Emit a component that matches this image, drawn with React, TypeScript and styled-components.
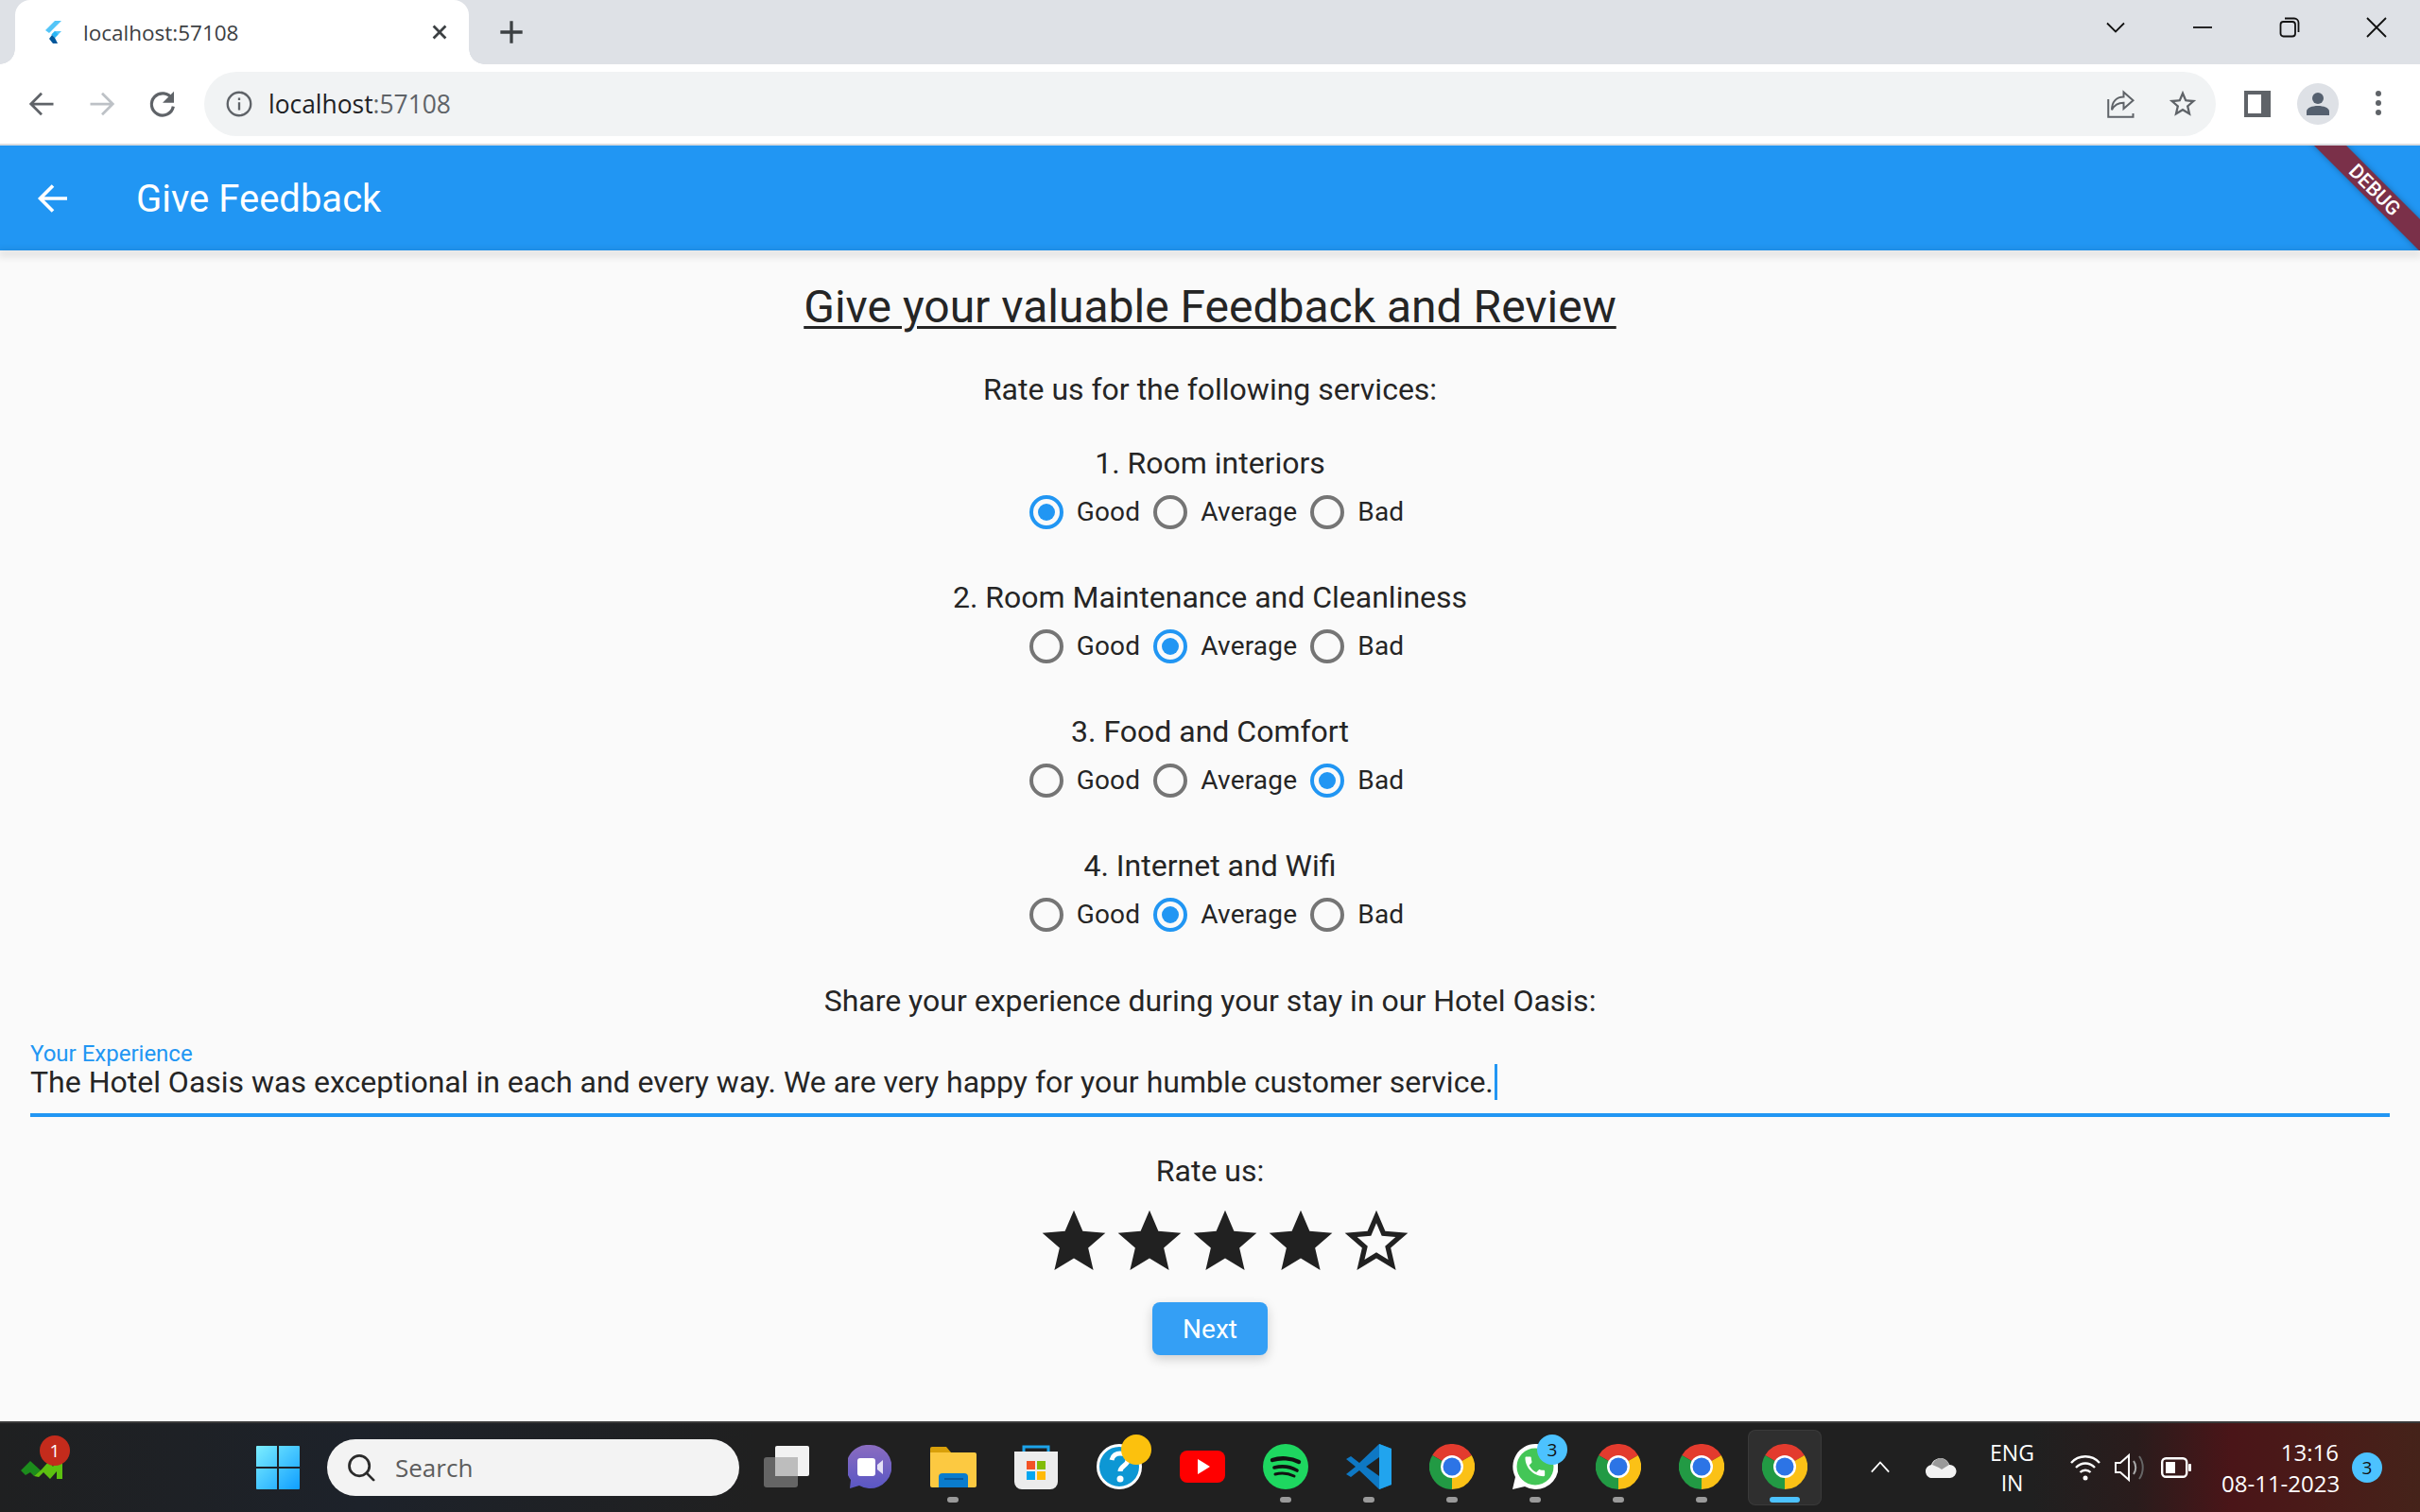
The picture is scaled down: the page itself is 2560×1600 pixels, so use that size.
import React from "react";
import styled, { createGlobalStyle } from "styled-components";

const GlobalStyle = createGlobalStyle`
  html, body {
    margin: 0;
    height: 100%;
    overflow: hidden;
    background: #fafafa;
  }
  * { box-sizing: border-box; }
`;

const Page = styled.div`
  width: 2560px;
  height: 1600px;
  display: flex;
  flex-direction: column;
  font-family: Roboto, "Liberation Sans", sans-serif;
  color: #252525;
`;

/* browser chrome */
const TabStrip = styled.div`
  height: 68px;
  background: #dee1e6;
  display: flex;
  padding-left: 16px;
  color: #3c4043;
`;

const Tab = styled.div`
  position: relative;
  width: 480px;
  background: #fff;
  border-radius: 16px 16px 0 0;
  display: flex;
  align-items: center;
  padding-left: 31px;
  font-family: "Open Sans", "Noto Sans", sans-serif;
  font-size: 22.5px;
  color: #3c4043;

  &::before,
  &::after {
    content: "";
    position: absolute;
    bottom: 0;
    width: 16px;
    height: 16px;
  }
  &::before {
    left: -16px;
    background: radial-gradient(circle at 0 0, #dee1e6 15.5px, #fff 16px);
  }
  &::after {
    right: -16px;
    background: radial-gradient(circle at 100% 0, #dee1e6 15.5px, #fff 16px);
  }
`;

const TabTitle = styled.span`
  margin-left: 23px;
  flex: 1;
`;

const TabClose = styled.span`
  display: flex;
  margin-right: 20px;
`;

const NewTab = styled.span`
  margin-left: 31px;
  display: flex;
  align-items: center;
  height: 100%;
`;

const WindowControls = styled.div`
  margin-left: auto;
  display: flex;
`;

const WindowButton = styled.span`
  width: 92px;
  height: 58px;
  display: flex;
  align-items: center;
  justify-content: center;
`;

const Toolbar = styled.div`
  height: 86px;
  background: #fff;
  border-bottom: 2px solid #dadce0;
  display: flex;
  align-items: center;
  padding: 0 12px;
`;

const ToolSlot = styled.span`
  width: 64px;
  height: 64px;
  flex: none;
  display: flex;
  align-items: center;
  justify-content: center;
`;

const AddressBar = styled.div`
  flex: 1;
  height: 68px;
  margin: 0 12px;
  background: #f1f3f4;
  border-radius: 34px;
  display: flex;
  align-items: center;
  padding: 0 4px 0 23px;
  font-family: "Open Sans", "Noto Sans", sans-serif;
  font-size: 26.4px;
  color: #202124;
`;

const AddressText = styled.span`
  margin-left: 17px;
  flex: 1;

  em {
    font-style: normal;
    color: #5f6368;
  }
`;

const AddressIcon = styled.span`
  width: 63px;
  display: flex;
  justify-content: center;
`;

const ShareIcon = styled(AddressIcon)`
  margin-right: 2px;
`;

const Avatar = styled.span`
  width: 44px;
  height: 44px;
  border-radius: 50%;
  background: #dee1e6;
  display: flex;
  align-items: center;
  justify-content: center;
`;

/* flutter app */
const AppBar = styled.header`
  position: relative;
  z-index: 1;
  height: 111px;
  background: #2196f3;
  color: #fff;
  display: flex;
  align-items: center;
  overflow: hidden;
  flex: none;
  padding-left: 38px;
`;

const AppBarShadow = styled.div`
  position: relative;
  z-index: 1;
  height: 0;
  box-shadow: 0 3px 8px 2px rgba(0, 0, 0, 0.2);
`;

const BackIcon = styled.span`
  display: flex;
  margin-right: 70px;
`;

const AppTitle = styled.h1`
  margin: 0;
  font-size: 40px;
  font-weight: 400;
  line-height: 48px;
  padding-top: 3px;
`;

const DebugRibbon = styled.div`
  position: absolute;
  top: 35px;
  right: -52px;
  width: 200px;
  height: 24px;
  background: #7a3049;
  transform: rotate(45deg);
  color: #fff;
  font-size: 21px;
  font-weight: 500;
  line-height: 24px;
  text-align: center;
  box-shadow: 0 0 6px rgba(0, 0, 0, 0.3);
`;

const Content = styled.main`
  flex: 1;
  background: #fafafa;
  display: flex;
  flex-direction: column;
  align-items: center;
  padding-top: 32px;
`;

const Heading = styled.h2`
  margin: 0;
  font-size: 48px;
  font-weight: 400;
  line-height: 56px;
  text-decoration: underline;
  text-decoration-thickness: 3px;
  text-underline-offset: 4px;
`;

const Prompt = styled.p`
  margin: 40px 0 0;
  font-size: 32px;
  line-height: 38px;
`;

const SharePrompt = styled(Prompt)`
  margin-top: 41px;
`;

const Question = styled.div`
  margin-top: 40px;
  display: flex;
  flex-direction: column;
  align-items: center;
`;

const QuestionTitle = styled.div`
  font-size: 32px;
  line-height: 38px;
`;

const RadioRow = styled.div`
  height: 64px;
  display: flex;
  align-items: center;
  padding-top: 1px;
`;

const RadioSlot = styled.span`
  width: 64px;
  height: 64px;
  display: flex;
  align-items: center;
  justify-content: center;
`;

const RadioMark = styled.span<{ $on: boolean }>`
  width: 36px;
  height: 36px;
  border-radius: 50%;
  border: 4.5px solid ${(p) => (p.$on ? "#2196f3" : "#757575")};
  display: flex;
  align-items: center;
  justify-content: center;

  &::after {
    content: "";
    width: 18px;
    height: 18px;
    border-radius: 50%;
    background: ${(p) => (p.$on ? "#2196f3" : "transparent")};
  }
`;

const RadioLabel = styled.span`
  font-size: 28px;
  letter-spacing: 0.2px;
  line-height: 38px;
`;

const Field = styled.div`
  align-self: stretch;
  margin: 27px 32px 0;
  border-bottom: 4px solid #2196f3;
  padding-bottom: 14px;
`;

const FieldLabel = styled.div`
  font-size: 24px;
  line-height: 21px;
  color: #2196f3;
`;

const FieldValue = styled.div`
  font-size: 32px;
  line-height: 38px;
  white-space: nowrap;
`;

const Caret = styled.span`
  display: inline-block;
  width: 3px;
  height: 38px;
  margin-left: 1px;
  background: #2196f3;
  vertical-align: top;
`;

const RatingPrompt = styled(Prompt)`
  margin-top: 38px;
`;

const Stars = styled.div`
  margin-top: 16px;
  padding-left: 32px;
  display: flex;
`;

const NextButton = styled.button`
  margin-top: 24px;
  width: 122px;
  height: 56px;
  border: 0;
  border-radius: 8px;
  background: #349ff5;
  color: #fff;
  font-family: inherit;
  font-size: 28px;
  font-weight: 400;
  box-shadow: 0 4px 12px rgba(0, 0, 0, 0.18);
`;

/* windows taskbar */
const Taskbar = styled.footer`
  height: 96px;
  flex: none;
  border-top: 2px solid #3a3a3a;
  background: linear-gradient(
    90deg,
    #1f2021 0,
    #1d222a 380px,
    #202020 800px,
    #202020 2150px,
    #2a1c1c 2260px,
    #4a1518 2360px,
    #4a1a18 2440px,
    #45231a 2560px
  );
  display: flex;
  align-items: center;
  padding-left: 22px;
  color: #fff;
  font-family: "Open Sans", "Noto Sans", sans-serif;
`;

const Widget = styled.span`
  position: relative;
  width: 44px;
  height: 60px;
  margin-right: 205px;
  display: flex;
  align-items: flex-end;
  padding-bottom: 18px;
`;

const CountBadge = styled.span<{ $color: string; $dark?: boolean }>`
  position: absolute;
  width: 32px;
  height: 32px;
  border-radius: 50%;
  background: ${(p) => p.$color};
  color: ${(p) => (p.$dark ? "#111" : "#fff")};
  font-size: 19px;
  line-height: 32px;
  text-align: center;
`;

const WidgetBadge = styled(CountBadge)`
  left: 20px;
  top: -4px;
`;

const SlotBadge = styled(CountBadge)`
  right: 10px;
  top: 5px;
`;

const StartIcon = styled.span`
  display: flex;
  margin-right: 29px;
`;

const SearchBox = styled.div`
  width: 436px;
  height: 60px;
  margin-right: 6px;
  background: #f3f3f3;
  border-radius: 30px;
  display: flex;
  align-items: center;
  padding-left: 21px;
  font-size: 26px;
  color: #5d5d5d;
`;

const SearchLabel = styled.span`
  margin-left: 21px;
`;

const TaskSlot = styled.span<{ $active?: boolean }>`
  position: relative;
  width: 88px;
  height: 80px;
  display: flex;
  align-items: center;
  justify-content: center;

  ${(p) =>
    p.$active &&
    `
    &::before {
      content: "";
      position: absolute;
      inset: 0 5px;
      border-radius: 8px;
      background: rgba(255, 255, 255, 0.07);
      border: 1px solid rgba(255, 255, 255, 0.05);
    }
  `}
`;

const TaskIcon = styled.span`
  position: relative;
  display: flex;
  margin-bottom: 2px;
`;

const RunDot = styled.span<{ $active?: boolean }>`
  position: absolute;
  left: 50%;
  bottom: 3px;
  width: ${(p) => (p.$active ? "32px" : "12px")};
  height: 6px;
  margin-left: ${(p) => (p.$active ? "-16px" : "-6px")};
  border-radius: 3px;
  background: ${(p) => (p.$active ? "#4cc2ff" : "#9a9a9a")};
`;

const TrayItem = styled.span<{ $gap: number }>`
  margin-left: ${(p) => p.$gap}px;
  display: flex;
`;

const LangText = styled.span`
  width: 47px;
  margin-left: 35px;
  font-size: 23px;
  line-height: 32px;
  text-align: center;
`;

const Clock = styled.span`
  width: 124px;
  margin-left: 32px;
  font-size: 24px;
  line-height: 33px;
  text-align: right;
  white-space: nowrap;
`;

const NotifyBadge = styled(CountBadge)`
  position: static;
  margin-left: 14px;
`;

/* icons */
const Stroke = ({ size, color, width, children }: { size: number; color: string; width: number; children: React.ReactNode }) => (
  <svg width={size} height={size} viewBox="0 0 24 24" fill="none" stroke={color} strokeWidth={width}>
    {children}
  </svg>
);

const ArrowLeft = ({ color, size = 30, width = 2.2 }: { color: string; size?: number; width?: number }) => (
  <Stroke size={size} color={color} width={width}>
    <path d="M22 12H3M12 3l-9 9 9 9" />
  </Stroke>
);

const ArrowRight = ({ color }: { color: string }) => (
  <Stroke size={30} color={color} width={2.2}>
    <path d="M2 12h19M12 3l9 9-9 9" />
  </Stroke>
);

const FlutterLogo = () => (
  <svg width="18" height="24" viewBox="0 0 18 24">
    <path d="M11 0h7L5 13l-4-3z" fill="#54c5f8" />
    <path d="M11 11h7l-7 7-3.5-3.5z" fill="#54c5f8" />
    <path d="M7.5 14.5L11 11l3.5 3.5L11 18z" fill="#29b6f6" />
    <path d="M8 15l3 3 3 6h-5l-4-5z" fill="#01579b" />
  </svg>
);

const StarFull = () => (
  <svg width="80" height="80" viewBox="0 0 24 24" fill="#212121">
    <path d="M12 17.27L18.18 21l-1.64-7.03L22 9.24l-7.19-.61L12 2 9.19 8.63 2 9.24l5.46 4.73L5.82 21z" />
  </svg>
);

const StarOutline = ({ size = 80, color = "#212121" }: { size?: number; color?: string }) => (
  <svg width={size} height={size} viewBox="0 0 24 24" fill={color}>
    <path d="M22 9.24l-7.19-.62L12 2 9.19 8.63 2 9.24l5.46 4.73L5.82 21 12 17.27 18.18 21l-1.63-7.03L22 9.24zM12 15.4l-3.76 2.27 1-4.28-3.32-2.88 4.38-.38L12 6.1l1.71 4.04 4.38.38-3.32 2.88 1 4.28L12 15.4z" />
  </svg>
);

const ChromeIcon = () => (
  <svg width="48" height="48" viewBox="0 0 48 48">
    <path d="M24 24L3.2 12A24 24 0 0 1 44.8 12z" fill="#e33b2e" />
    <path d="M24 24L44.8 12A24 24 0 0 1 24 48z" fill="#fbc116" />
    <path d="M24 24L24 48A24 24 0 0 1 3.2 12z" fill="#229a44" />
    <circle cx="24" cy="24" r="12" fill="#fff" />
    <circle cx="24" cy="24" r="9.5" fill="#2c74e6" />
  </svg>
);

const TaskViewIcon = () => (
  <svg width="48" height="44" viewBox="0 0 48 44">
    <rect x="12" y="0" width="36" height="32" rx="2" fill="#f2f2f2" />
    <rect x="0" y="12" width="36" height="32" rx="3" fill="#6d6d6d" fillOpacity="0.9" />
    <rect x="12" y="12" width="24" height="20" fill="#bdbdbd" />
  </svg>
);

const MeetIcon = () => (
  <svg width="46" height="46" viewBox="0 0 46 46">
    <defs>
      <linearGradient id="meet" x1="0" y1="0" x2="0" y2="1">
        <stop offset="0" stopColor="#8a6cc0" />
        <stop offset="1" stopColor="#5a57c4" />
      </linearGradient>
    </defs>
    <path d="M23 0a23 23 0 1 1-11 43L2 46l1-9A23 23 0 0 1 23 0z" fill="url(#meet)" />
    <rect x="10" y="14" width="19" height="19" rx="3" fill="#fff" />
    <path d="M31 21l6-5v15l-6-5z" fill="#e4e0f6" />
  </svg>
);

const FolderIcon = () => (
  <svg width="49" height="44" viewBox="0 0 49 44">
    <path d="M0 3a2 2 0 0 1 2-2h15l5 6h-22z" fill="#d9a00a" />
    <path d="M0 7h47a2 2 0 0 1 2 2v33a2 2 0 0 1-2 2H2a2 2 0 0 1-2-2z" fill="#fcc941" />
    <path d="M9 44V33a4 4 0 0 1 4-4h23a4 4 0 0 1 4 4v11z" fill="#0a7ccd" />
    <rect x="15" y="34" width="20" height="2" fill="#0a5b9c" />
  </svg>
);

const StoreIcon = () => (
  <svg width="46" height="48" viewBox="0 0 46 48">
    <path d="M10 10V3h26v7" fill="none" stroke="#1ca3ea" strokeWidth="3" />
    <path d="M0 8h46v32a8 8 0 0 1-8 8H8a8 8 0 0 1-8-8z" fill="#ececec" />
    <rect x="13" y="18" width="9" height="9" fill="#f35325" />
    <rect x="24" y="18" width="9" height="9" fill="#81bc06" />
    <rect x="13" y="29" width="9" height="9" fill="#05a6f0" />
    <rect x="24" y="29" width="9" height="9" fill="#ffba08" />
  </svg>
);

const HelpIcon = () => (
  <svg width="48" height="48" viewBox="0 0 48 48">
    <circle cx="24" cy="24" r="22.5" fill="#0d97d4" stroke="#fff" strokeWidth="3" />
    <path d="M16 17c1-5 5-7 9-7 5 0 8 3 8 7 0 6-8 6-8 12" fill="none" stroke="#fff" strokeWidth="5" />
    <circle cx="25" cy="37" r="3.5" fill="#fff" />
  </svg>
);

const YouTubeIcon = () => (
  <svg width="48" height="34" viewBox="0 0 48 34">
    <rect width="48" height="34" rx="8" fill="#f00" />
    <path d="M19 9l13 8-13 8z" fill="#fff" />
  </svg>
);

const SpotifyIcon = () => (
  <svg width="48" height="48" viewBox="0 0 48 48">
    <circle cx="24" cy="24" r="24" fill="#1ed760" />
    <g fill="none" stroke="#111" strokeLinecap="round">
      <path d="M10 17c9-3 20-2 28 2" strokeWidth="4.4" />
      <path d="M12 25c8-2 17-1 24 3" strokeWidth="3.6" />
      <path d="M13 32c7-2 14-1 20 2" strokeWidth="3" />
    </g>
  </svg>
);

const VsCodeIcon = () => (
  <svg width="48" height="48" viewBox="0 0 48 48">
    <path d="M35 0L14 20 5 13l-5 3 10 8-10 8 5 3 9-7 21 20 13-5V5z" fill="#0e78c4" />
    <path d="M35 0l13 5v38l-13 5z" fill="#21a4ee" />
    <path d="M35 14L21 24l14 10z" fill="#202020" />
  </svg>
);

const WhatsAppIcon = () => (
  <svg width="48" height="48" viewBox="0 0 48 48">
    <path d="M24 0a24 24 0 1 1-11 45L0 48l3-13A24 24 0 0 1 24 0z" fill="#fff" />
    <circle cx="24" cy="24" r="19.5" fill="#43c657" />
    <g transform="translate(10 10) scale(1.15)">
      <path
        d="M6.62 10.79c1.44 2.83 3.76 5.14 6.59 6.59l2.2-2.2c.27-.27.67-.36 1.02-.24 1.12.37 2.33.57 3.57.57.55 0 1 .45 1 1V20c0 .55-.45 1-1 1-9.39 0-17-7.61-17-17 0-.55.45-1 1-1h3.5c.55 0 1 .45 1 1 0 1.25.2 2.45.57 3.57.11.35.03.74-.25 1.02l-2.2 2.2z"
        fill="#fff"
      />
    </g>
  </svg>
);

const questions = [
  { title: "1. Room interiors", picked: "Good" },
  { title: "2. Room Maintenance and Cleanliness", picked: "Average" },
  { title: "3. Food and Comfort", picked: "Bad" },
  { title: "4. Internet and Wifi", picked: "Average" }
];

const grades = ["Good", "Average", "Bad"];

const taskItems: { icon: React.ReactNode; running?: boolean; active?: boolean; badge?: React.ReactNode }[] = [
  { icon: <TaskViewIcon /> },
  { icon: <MeetIcon /> },
  { icon: <FolderIcon />, running: true },
  { icon: <StoreIcon /> },
  { icon: <HelpIcon />, badge: <SlotBadge $color="#fcc10d" /> },
  { icon: <YouTubeIcon /> },
  { icon: <SpotifyIcon />, running: true },
  { icon: <VsCodeIcon />, running: true },
  { icon: <ChromeIcon />, running: true },
  { icon: <WhatsAppIcon />, running: true, badge: <SlotBadge $color="#4cc2ff" $dark>3</SlotBadge> },
  { icon: <ChromeIcon />, running: true },
  { icon: <ChromeIcon />, running: true },
  { icon: <ChromeIcon />, running: true, active: true }
];

export default function App() {
  return (
    <Page>
      <GlobalStyle />
      <TabStrip>
        <Tab>
          <FlutterLogo />
          <TabTitle>localhost:57108</TabTitle>
          <TabClose>
            <Stroke size={22} color="#3c4043" width={3}>
              <path d="M5 5l14 14M19 5L5 19" />
            </Stroke>
          </TabClose>
        </Tab>
        <NewTab>
          <Stroke size={28} color="#3c4043" width={2.8}>
            <path d="M12 2v20M2 12h20" />
          </Stroke>
        </NewTab>
        <WindowControls>
          <WindowButton>
            <Stroke size={24} color="#111" width={1.8}>
              <path d="M3 7.5l9 9 9-9" />
            </Stroke>
          </WindowButton>
          <WindowButton>
            <Stroke size={24} color="#111" width={1.8}>
              <path d="M2 12h20" />
            </Stroke>
          </WindowButton>
          <WindowButton>
            <Stroke size={24} color="#111" width={1.8}>
              <rect x="2.5" y="6" width="15.5" height="15.5" rx="3" />
              <path d="M7 2.5h10a4.5 4.5 0 0 1 4.5 4.5v10" />
            </Stroke>
          </WindowButton>
          <WindowButton>
            <Stroke size={24} color="#111" width={1.8}>
              <path d="M2 2l20 20M22 2L2 22" />
            </Stroke>
          </WindowButton>
        </WindowControls>
      </TabStrip>

      <Toolbar>
        <ToolSlot>
          <ArrowLeft color="#5f6368" />
        </ToolSlot>
        <ToolSlot>
          <ArrowRight color="#bdc1c6" />
        </ToolSlot>
        <ToolSlot>
          <Stroke size={32} color="#5f6368" width={2.4}>
            <path d="M19.5 8A8.7 8.7 0 1 0 20.5 14" />
            <path d="M21 2v9h-9z" fill="#5f6368" stroke="none" />
          </Stroke>
        </ToolSlot>
        <AddressBar>
          <Stroke size={28} color="#5f6368" width={2}>
            <circle cx="12" cy="12" r="10.5" />
            <path d="M12 10.5v7M12 6.5v2" />
          </Stroke>
          <AddressText>
            localhost<em>:57108</em>
          </AddressText>
          <ShareIcon>
            <Stroke size={30} color="#5f6368" width={1.6}>
              <path d="M1 8v15h21v-3M22 9l-8-7v4c-6 0-10 4-10 11 2-4 5-6 10-6v5z" />
            </Stroke>
          </ShareIcon>
          <AddressIcon>
            <StarOutline size={34} color="#5f6368" />
          </AddressIcon>
        </AddressBar>
        <ToolSlot>
          <svg width="28" height="28" viewBox="0 0 28 28">
            <rect width="28" height="28" fill="#5f6368" />
            <rect x="4" y="4" width="14" height="20" fill="#fff" />
          </svg>
        </ToolSlot>
        <ToolSlot>
          <Avatar>
            <svg width="26" height="26" viewBox="0 0 26 26" fill="#55606f">
              <circle cx="13" cy="7" r="6" />
              <path d="M1 25v-4c0-4 6-6 12-6s12 2 12 6v4z" />
            </svg>
          </Avatar>
        </ToolSlot>
        <ToolSlot>
          <svg width="6" height="28" viewBox="0 0 6 28" fill="#5f6368">
            <circle cx="3" cy="3" r="3" />
            <circle cx="3" cy="13" r="3" />
            <circle cx="3" cy="23" r="3" />
          </svg>
        </ToolSlot>
      </Toolbar>

      <AppBar>
        <BackIcon>
          <ArrowLeft color="#fff" size={36} width={2.4} />
        </BackIcon>
        <AppTitle>Give Feedback</AppTitle>
        <DebugRibbon>DEBUG</DebugRibbon>
      </AppBar>
      <AppBarShadow />

      <Content>
        <Heading>Give your valuable Feedback and Review</Heading>
        <Prompt>Rate us for the following services:</Prompt>
        {questions.map((q) => (
          <Question key={q.title}>
            <QuestionTitle>{q.title}</QuestionTitle>
            <RadioRow>
              {grades.map((g) => (
                <React.Fragment key={g}>
                  <RadioSlot>
                    <RadioMark $on={q.picked === g} />
                  </RadioSlot>
                  <RadioLabel>{g}</RadioLabel>
                </React.Fragment>
              ))}
            </RadioRow>
          </Question>
        ))}
        <SharePrompt>Share your experience during your stay in our Hotel Oasis:</SharePrompt>
        <Field>
          <FieldLabel>Your Experience</FieldLabel>
          <FieldValue>
            The Hotel Oasis was exceptional in each and every way. We are very happy for your humble customer service.
            <Caret />
          </FieldValue>
        </Field>
        <RatingPrompt>Rate us:</RatingPrompt>
        <Stars>
          <StarFull />
          <StarFull />
          <StarFull />
          <StarFull />
          <StarOutline />
        </Stars>
        <NextButton>Next</NextButton>
      </Content>

      <Taskbar>
        <Widget>
          <svg width="44" height="22" viewBox="0 0 44 22">
            <path d="M0 13L10 3l11 10-7 6-4-4-5 3z" fill="#1c8c1c" />
            <path d="M14 19l8-7 8-9 4 6 4-7h6v20h-6V14l-7 8-7-7-5 5z" fill="#5cc010" />
          </svg>
          <WidgetBadge $color="#c42b1c">1</WidgetBadge>
        </Widget>
        <StartIcon>
          <svg width="46" height="46" viewBox="0 0 46 46">
            <defs>
              <linearGradient id="win" x1="0" y1="0" x2="1" y2="1">
                <stop offset="0" stopColor="#7ceeff" />
                <stop offset="1" stopColor="#0f9eff" />
              </linearGradient>
            </defs>
            <path d="M0 1a1 1 0 0 1 1-1h21v22H0zM24 0h21a1 1 0 0 1 1 1v21H24zM0 24h22v22H1a1 1 0 0 1-1-1zM24 24h22v21a1 1 0 0 1-1 1H24z" fill="url(#win)" />
          </svg>
        </StartIcon>
        <SearchBox>
          <Stroke size={30} color="#2b2b2b" width={2.2}>
            <circle cx="10.5" cy="10.5" r="8.5" />
            <path d="M16.5 16.5l6 6" strokeLinecap="round" />
          </Stroke>
          <SearchLabel>Search</SearchLabel>
        </SearchBox>
        {taskItems.map((item, i) => (
          <TaskSlot key={i} $active={item.active}>
            <TaskIcon>{item.icon}</TaskIcon>
            {item.badge}
            {item.running && <RunDot $active={item.active} />}
          </TaskSlot>
        ))}
        <TrayItem $gap={46}>
          <Stroke size={22} color="#fff" width={2}>
            <path d="M2 17L12 6l10 11" />
          </Stroke>
        </TrayItem>
        <TrayItem $gap={37}>
          <svg width="33" height="21" viewBox="0 0 33 21">
            <path d="M8 21a7 7 0 0 1-2-14c2-5 6-7 10-7s8 3 9 7a7 7 0 0 1 1 14z" fill="#f2f2f2" />
            <path d="M7 7c2-5 6-7 9-7s8 3 9 7l-8 5-3-2z" fill="#9a9a9a" />
          </svg>
        </TrayItem>
        <LangText>
          ENG
          <br />
          IN
        </LangText>
        <TrayItem $gap={38}>
          <svg width="32" height="32" viewBox="0 0 32 32" fill="none" stroke="#fff" strokeWidth="2.4">
            <path d="M1 11c8-9 22-9 30 0M6 16c6-6 14-6 20 0M10.500 21c3-3 8-3 11 0" />
            <circle cx="16" cy="27" r="2.500" fill="#fff" stroke="none" />
          </svg>
        </TrayItem>
        <TrayItem $gap={15}>
          <svg width="31" height="36" viewBox="0 0 31 36" fill="none" stroke="#fff" strokeWidth="2">
            <path d="M1 13h5l9-8v26l-9-8H1z" />
            <path d="M20 11c3 4 3 10 0 14" stroke="#aaa" />
            <path d="M26 6c5 7 5 17 0 24" stroke="#666" />
          </svg>
        </TrayItem>
        <TrayItem $gap={18}>
          <svg width="32" height="22" viewBox="0 0 32 22">
            <rect x="1.200" y="1.200" width="26" height="19.600" rx="4" fill="none" stroke="#fff" strokeWidth="2.400" />
            <rect x="5" y="5" width="10" height="12" fill="#fff" />
            <rect x="29" y="7" width="3" height="8" rx="1" fill="#fff" />
          </svg>
        </TrayItem>
        <Clock>
          13:16
          <br />
          08-11-2023
        </Clock>
        <NotifyBadge $color="#4cc2ff" $dark>3</NotifyBadge>
      </Taskbar>
    </Page>
  );
}
